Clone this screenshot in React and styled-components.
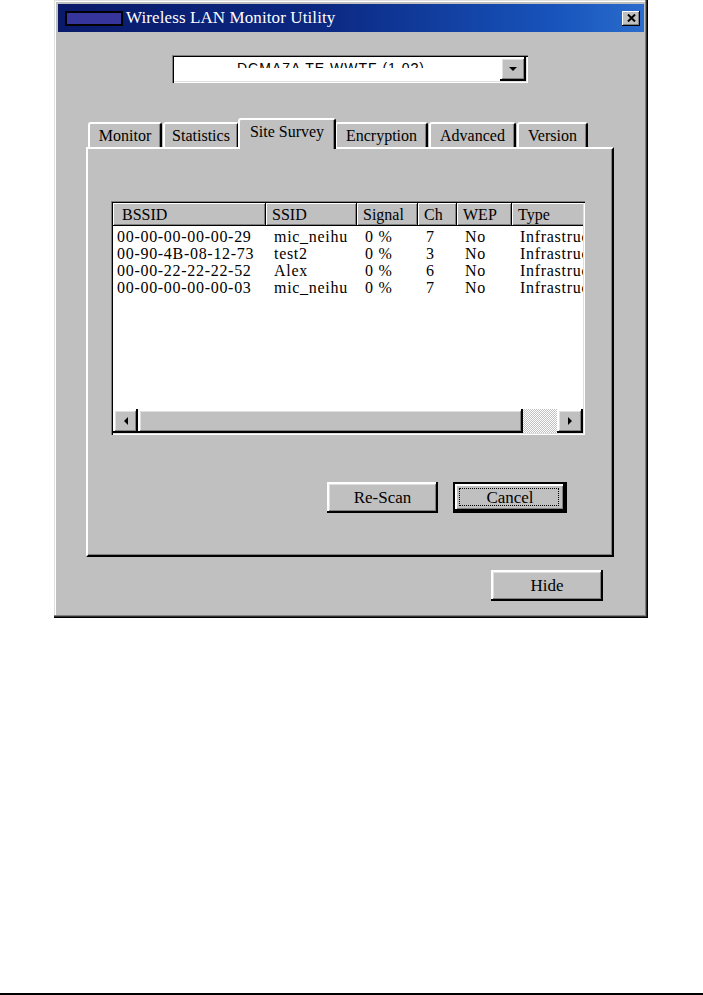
import React from 'react';
import styled, { createGlobalStyle, css } from 'styled-components';

const GlobalStyle = createGlobalStyle`
  html, body {
    margin: 0;
    padding: 0;
    background: #fff;
  }
  body {
    font-family: "Liberation Serif", "Times New Roman", serif;
    color: #000;
  }
`;

const raised = css`
  box-shadow: inset -2px -2px #000, inset 2px 2px #fff, inset -3px -3px #808080, inset 3px 3px #dfdfdf;
`;

const sunken = css`
  box-shadow: inset 1px 1px #808080, inset 2px 2px #000, inset -1px -1px #fff, inset -2px -2px #dfdfdf;
`;

const Page = styled.div`
  width: 703px;
  min-height: 995px;
  display: flex;
  flex-direction: column;
`;

const Window = styled.div`
  margin-left: 54px;
  width: 594px;
  height: 618px;
  box-sizing: border-box;
  padding: 4px 4px 3px;
  background: #c0c0c0;
  display: flex;
  flex-direction: column;
  box-shadow: inset -1px -1px #000, inset -2px -2px #303030, inset -3px -3px #808080,
    inset 1px 1px #dfdfdf, inset 2px 2px #fff;
`;

const TitleBar = styled.div`
  height: 28px;
  flex-shrink: 0;
  display: flex;
  align-items: center;
  background: linear-gradient(90deg, #0a1a6a 0%, #0b2882 45%, #1854bc 85%, #2a6ccc 100%);
`;

const AppIcon = styled.div`
  width: 58px;
  height: 15px;
  box-sizing: border-box;
  margin-left: 7px;
  background: #35359c;
  border: 2px solid #000;
`;

const TitleText = styled.span`
  margin-left: 3px;
  flex: 1;
  color: #fff;
  font-size: 17px;
  letter-spacing: 0.1px;
`;

const CloseBtn = styled.div`
  width: 18px;
  height: 15px;
  margin-right: 4px;
  background: #c0c0c0;
  display: flex;
  align-items: center;
  justify-content: center;
  box-shadow: inset -1px -1px #000, inset 1px 1px #fff, inset -2px -2px #808080;
`;

const Body = styled.div`
  flex: 1;
  display: flex;
  flex-direction: column;
  align-items: flex-start;
`;

const Combo = styled.div`
  margin: 23px 0 0 114px;
  width: 356px;
  height: 28px;
  box-sizing: border-box;
  padding: 2px;
  background: #fff;
  display: flex;
  ${sunken}
`;

const ComboField = styled.div`
  flex: 1;
  padding-left: 63px;
`;

const ComboText = styled.div`
  margin-top: 3px;
  height: 8px;
  overflow: hidden;
  font-family: "Liberation Sans", Arial, sans-serif;
  font-size: 14px;
  line-height: 16px;
  letter-spacing: 1px;
  white-space: nowrap;
`;

const ComboArrow = styled.div`
  width: 26px;
  background: #c0c0c0;
  display: flex;
  align-items: center;
  justify-content: center;
  ${raised}
`;

const TabArea = styled.div`
  margin: 35px 0 0 28px;
  display: flex;
  flex-direction: column;
`;

const TabStrip = styled.div`
  height: 29px;
  padding-left: 2px;
  display: flex;
  align-items: flex-end;
  gap: 1px;
`;

const Tab = styled.div`
  position: relative;
  width: ${(p) => p.$w}px;
  height: 25px;
  box-sizing: border-box;
  background: #c0c0c0;
  border: 2px solid;
  border-color: #fff #000 transparent #fff;
  border-bottom: none;
  border-radius: 3px 3px 0 0;
  box-shadow: inset -1px 0 #808080;
  display: flex;
  align-items: center;
  justify-content: center;
  font-size: 16px;
  white-space: nowrap;
  ${(p) =>
    p.$active &&
    css`
      height: 31px;
      margin: 0 -2px -2px;
      padding-bottom: 6px;
      z-index: 1;
    `}
`;

const Panel = styled.div`
  width: 528px;
  height: 410px;
  box-sizing: border-box;
  padding: 52px 0 0 23px;
  border: 2px solid;
  border-color: #fff #000 #000 #fff;
  box-shadow: inset -1px -1px #808080;
  display: flex;
  flex-direction: column;
`;

const ListView = styled.div`
  width: 474px;
  height: 234px;
  box-sizing: border-box;
  padding: 2px;
  background: #fff;
  display: flex;
  flex-direction: column;
  ${sunken}
`;

const ListBody = styled.div`
  flex: 1;
  overflow: hidden;
`;

const columns = '153px 91px 61px 39px 55px 110px';

const HeaderRow = styled.div`
  display: grid;
  grid-template-columns: ${columns};
  height: 23px;
  margin-bottom: 2px;
`;

const HeaderCell = styled.div`
  background: #c0c0c0;
  padding-left: ${(p) => (p.$first ? 9 : 6)}px;
  font-size: 16px;
  line-height: 23px;
  white-space: nowrap;
  overflow: hidden;
  box-shadow: inset -1px -1px #000, inset 1px 1px #fff, inset -2px -2px #808080;
`;

const Row = styled.div`
  display: grid;
  grid-template-columns: ${columns};
  height: 17px;
`;

const Cell = styled.div`
  padding-left: ${(p) => (p.$first ? 4 : 8)}px;
  font-size: 16px;
  line-height: 17px;
  letter-spacing: 0.7px;
  white-space: nowrap;
  overflow: hidden;
`;

const HScroll = styled.div`
  height: 24px;
  display: flex;
  flex-shrink: 0;
`;

const ScrollBtn = styled.div`
  width: ${(p) => p.$w}px;
  background: #c0c0c0;
  display: flex;
  align-items: center;
  justify-content: center;
  ${raised}
`;

const Thumb = styled.div`
  width: 385px;
  background: #c0c0c0;
  ${raised}
`;

const Track = styled.div`
  flex: 1;
  background: repeating-conic-gradient(#c0c0c0 0 25%, #fff 0 50%) 0 0 / 2px 2px;
`;

const ButtonRow = styled.div`
  margin-top: 47px;
  padding-right: 45px;
  display: flex;
  justify-content: flex-end;
  gap: 15px;
`;

const Button = styled.div`
  position: relative;
  width: ${(p) => p.$w}px;
  height: 31px;
  box-sizing: border-box;
  background: #c0c0c0;
  display: flex;
  align-items: center;
  justify-content: center;
  font-size: 17px;
  ${raised}
  ${(p) =>
    p.$default &&
    css`
      box-shadow: inset 0 0 0 2px #000, inset -4px -4px #000, inset 4px 4px #fff,
        inset -5px -5px #808080;
      &::after {
        content: '';
        position: absolute;
        inset: 6px 8px 7px 6px;
        border: 1px dotted #000;
      }
    `}
`;

const Footer = styled.div`
  align-self: flex-end;
  margin: 13px 41px 0 0;
`;

const Rule = styled.div`
  margin-top: auto;
  height: 2px;
  background: #000;
`;

const tabs = [
  { label: 'Monitor', w: 74 },
  { label: 'Statistics', w: 76 },
  { label: 'Site Survey', w: 98, active: true },
  { label: 'Encryption', w: 93 },
  { label: 'Advanced', w: 87 },
  { label: 'Version', w: 71 },
];

const headers = ['BSSID', 'SSID', 'Signal', 'Ch', 'WEP', 'Type'];

const rows = [
  ['00-00-00-00-00-29', 'mic_neihu', '0 %', '7', 'No', 'Infrastructure'],
  ['00-90-4B-08-12-73', 'test2', '0 %', '3', 'No', 'Infrastructure'],
  ['00-00-22-22-22-52', 'Alex', '0 %', '6', 'No', 'Infrastructure'],
  ['00-00-00-00-00-03', 'mic_neihu', '0 %', '7', 'No', 'Infrastructure'],
];

function Triangle({ dir }) {
  const pts = {
    down: '0,0 8,0 4,4',
    left: '4,0 4,8 0,4',
    right: '0,0 0,8 4,4',
  };
  const size = dir === 'down' ? [8, 4] : [4, 8];
  return (
    <svg width={size[0]} height={size[1]} viewBox={`0 0 ${size[0]} ${size[1]}`}>
      <polygon points={pts[dir]} fill="#000" />
    </svg>
  );
}

function App() {
  return (
    <Page>
      <GlobalStyle />
      <Window>
        <TitleBar>
          <AppIcon />
          <TitleText>Wireless LAN Monitor Utility</TitleText>
          <CloseBtn>
            <svg width="9" height="8" viewBox="0 0 9 8">
              <path d="M1 0.5 L8 7.5 M8 0.5 L1 7.5" stroke="#000" strokeWidth="2" />
            </svg>
          </CloseBtn>
        </TitleBar>
        <Body>
          <Combo>
            <ComboField>
              <ComboText>DCMA7A TE WWTF (1.0?)</ComboText>
            </ComboField>
            <ComboArrow>
              <Triangle dir="down" />
            </ComboArrow>
          </Combo>

          <TabArea>
            <TabStrip>
              {tabs.map((t) => (
                <Tab key={t.label} $w={t.w} $active={t.active}>
                  {t.label}
                </Tab>
              ))}
            </TabStrip>
            <Panel>
              <ListView>
                <ListBody>
                  <HeaderRow>
                    {headers.map((h, i) => (
                      <HeaderCell key={h} $first={i === 0}>
                        {h}
                      </HeaderCell>
                    ))}
                  </HeaderRow>
                  {rows.map((r, i) => (
                    <Row key={i}>
                      {r.map((c, j) => (
                        <Cell key={j} $first={j === 0}>
                          {c}
                        </Cell>
                      ))}
                    </Row>
                  ))}
                </ListBody>
                <HScroll>
                  <ScrollBtn $w={25}>
                    <Triangle dir="left" />
                  </ScrollBtn>
                  <Thumb />
                  <Track />
                  <ScrollBtn $w={26}>
                    <Triangle dir="right" />
                  </ScrollBtn>
                </HScroll>
              </ListView>
              <ButtonRow>
                <Button $w={111}>Re-Scan</Button>
                <Button $w={114} $default>
                  Cancel
                </Button>
              </ButtonRow>
            </Panel>
          </TabArea>

          <Footer>
            <Button $w={112}>Hide</Button>
          </Footer>
        </Body>
      </Window>
      <Rule />
    </Page>
  );
}

export default App;
